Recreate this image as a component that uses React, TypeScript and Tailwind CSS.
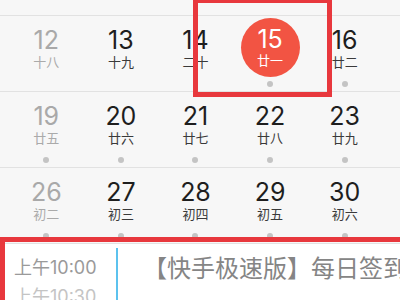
type Day = { n: string; l: string; muted?: boolean; dot?: boolean; today?: boolean };

const rows: Day[][] = [
  [
    { n: "12", l: "十八", muted: true },
    { n: "13", l: "十九" },
    { n: "14", l: "二十" },
    { n: "15", l: "廿一", today: true, dot: true },
    { n: "16", l: "廿二", dot: true },
  ],
  [
    { n: "19", l: "廿五", muted: true, dot: true },
    { n: "20", l: "廿六", dot: true },
    { n: "21", l: "廿七", dot: true },
    { n: "22", l: "廿八", dot: true },
    { n: "23", l: "廿九", dot: true },
  ],
  [
    { n: "26", l: "初二", muted: true, dot: true },
    { n: "27", l: "初三", dot: true },
    { n: "28", l: "初四", dot: true },
    { n: "29", l: "初五", dot: true },
    { n: "30", l: "初六", dot: true },
  ],
];

const font = { fontFamily: "Inter, 'Noto Sans CJK SC', sans-serif" };

function Cell({ d }: { d: Day }) {
  if (d.today) {
    return (
      <div className="flex flex-col items-center">
        <div className="mt-[2px] flex h-[59px] w-[59px] flex-col items-center justify-center rounded-full bg-[#f25443] text-white">
          <span className="text-[25px] leading-[25px]">{d.n}</span>
          <span className="mt-[1px] text-[13px] leading-[15px]">{d.l}</span>
        </div>
        <span className="mt-[4px] h-[6px] w-[6px] rounded-full bg-[#c4c4c4]" />
      </div>
    );
  }
  return (
    <div className="flex flex-col items-center pt-[10px]">
      <span className={`text-[25px] leading-[28px] ${d.muted ? "text-[#a9a9a9]" : "text-[#1e1e1e]"}`}>{d.n}</span>
      <span className={`text-[13px] leading-[16px] ${d.muted ? "text-[#aaaaaa]" : "text-[#3a3a3a]"}`}>{d.l}</span>
      {d.dot && <span className="mt-[11px] h-[6px] w-[6px] rounded-full bg-[#c4c4c4]" />}
    </div>
  );
}

export default function App() {
  return (
    <div className="relative h-[300px] w-[400px] overflow-hidden bg-[#f7f7f7]" style={font}>
      <div className="h-[16px] border-b border-[#e2e2e2]" />
      {rows.map((r, i) => (
        <div key={i} className="grid h-[76px] grid-cols-[repeat(5,74.6px)] border-b border-[#e2e2e2] pl-[9px]">
          {r.map((d) => (
            <Cell key={d.n} d={d} />
          ))}
        </div>
      ))}

      <div className="flex h-[60px] bg-white">
        <div className="w-[116px] shrink-0 pl-[14px] pt-[13px]">
          <div className="whitespace-nowrap text-[18px] leading-[22px] text-[#9a9a9a]">上午10:00</div>
          <div className="mt-[7px] whitespace-nowrap text-[18px] leading-[22px] text-[#c4c4c4]">上午10:30</div>
        </div>
        <div className="mt-[4px] w-[2px] shrink-0 bg-[#5cc2ee]" />
        <div className="whitespace-nowrap pl-[25px] pt-[10px] text-[24px] leading-[30px] text-[#858585]">
          【快手极速版】每日签到
        </div>
      </div>

      <div className="absolute left-[193px] top-[-2px] h-[99px] w-[139px] border-[5px] border-[#e8383d]" />
      <div className="absolute left-0 top-[237px] h-[80px] w-[420px] border-[5px] border-[#e8383d]" />
    </div>
  );
}
